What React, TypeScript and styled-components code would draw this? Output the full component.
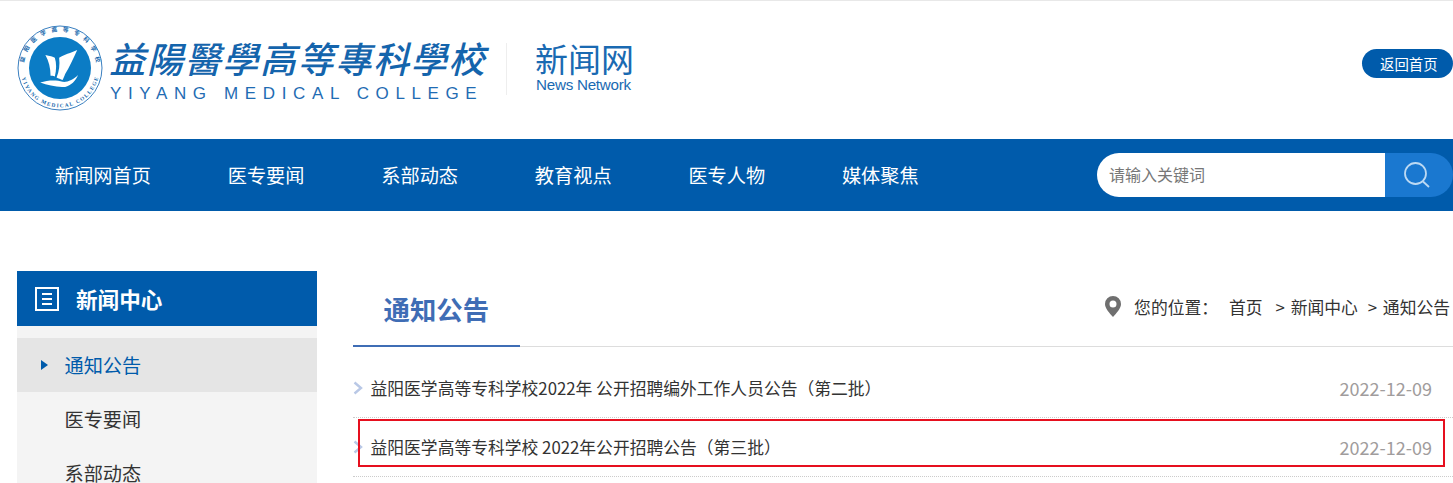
import React from 'react';
import styled, { createGlobalStyle } from 'styled-components';

const blue = '#005bab';
const cjk = '"Noto Sans CJK SC", "Noto Sans", sans-serif';

const navItems = ['新闻网首页', '医专要闻', '系部动态', '教育视点', '医专人物', '媒体聚焦'];
const sideItems = ['通知公告', '医专要闻', '系部动态'];
const newsItems = [
  { title: '益阳医学高等专科学校2022年 公开招聘编外工作人员公告（第二批）', date: '2022-12-09' },
  { title: '益阳医学高等专科学校 2022年公开招聘公告（第三批）', date: '2022-12-09', marked: true },
];

const Seal = () => (
  <SealSvg viewBox="0 0 86 86">
    <defs>
      <path id="sealTop" d="M6.5 43a36.5 36.5 0 0 1 73 0" />
      <path id="sealBottom" d="M3.5 43a39.5 39.5 0 0 0 79 0" />
    </defs>
    <circle cx="43" cy="43" r="42" fill="#fff" stroke="#3a7fc0" strokeWidth="1" />
    <circle cx="43" cy="43" r="31" fill="#0b7cc5" />
    <text fontSize="5.800" fontWeight="700" fill="#1668ac" fontFamily={cjk}>
      <textPath href="#sealTop" startOffset="50%" textAnchor="middle" textLength="104">
        益阳医学高等专科学校
      </textPath>
    </text>
    <text fontSize="5.400" fontWeight="700" fill="#1668ac" fontFamily='"Liberation Serif", serif'>
      <textPath href="#sealBottom" startOffset="50%" textAnchor="middle" textLength="104">
        YIYANG MEDICAL COLLEGE
      </textPath>
    </text>
    <g transform="translate(43 43) scale(.86) translate(-43 -47)" fill="#fff">
      <path d="M26 32c5 1 9 2 11 3 2 6 2 14 0 22-2-1-4-1-5-1 0-9-2-17-6-24zM42 35c5-3 14-6 21-9-4 9-9 20-14 28-1 3-2 5-3 7-2-1-5-2-7-3 3-7 4-15 3-23z" />
      <path d="M20 64c9-3 19-3 26-1 5 1 13-3 18-8-3 7-8 12-15 14-9 1-20-2-29-5z" />
    </g>
  </SealSvg>
);

const Caret = () => (
  <CaretSvg viewBox="0 0 10 14">
    <path d="M1.5 1.5 8 7l-6.500 5.500" fill="none" stroke="#b9c8e6" strokeWidth="2.400" />
  </CaretSvg>
);

export default function App() {
  return (
    <Page>
      <GlobalStyle />
      <Header>
        <Brand>
          <Seal />
          <SchoolName>
            <Calligraphy>益陽醫學高等專科學校</Calligraphy>
            <EnglishName>YIYANG MEDICAL COLLEGE</EnglishName>
          </SchoolName>
          <Divider />
          <SiteName>
            <SiteTitle>新闻网</SiteTitle>
            <SiteSub>News Network</SiteSub>
          </SiteName>
        </Brand>
        <BackHome>返回首页</BackHome>
      </Header>

      <NavBar>
        <NavList>
          {navItems.map((item) => (
            <NavItem key={item}>{item}</NavItem>
          ))}
        </NavList>
        <Search>
          <SearchField>请输入关键词</SearchField>
          <SearchButton>
            <svg width="30" height="30" viewBox="0 0 30 30" fill="none" stroke="#bcd9f3" strokeWidth="1.800">
              <circle cx="13.500" cy="13.500" r="10.500" />
              <path d="m21 21.500 6 5.500" />
            </svg>
          </SearchButton>
        </Search>
      </NavBar>

      <Main>
        <Sidebar>
          <SideHead>
            <svg width="24" height="24" viewBox="0 0 24 24" fill="none" stroke="#fff">
              <rect x="1" y="1" width="22" height="22" strokeWidth="2" />
              <path d="M7 7h10M7 12h10M7 17h10" strokeWidth="2" />
            </svg>
            <SideTitle>新闻中心</SideTitle>
          </SideHead>
          <SideList>
            {sideItems.map((item, i) => (
              <SideItem key={item} $active={i === 0}>
                {item}
              </SideItem>
            ))}
          </SideList>
        </Sidebar>

        <Content>
          <ContentHead>
            <Tab>通知公告</Tab>
            <Crumbs>
              <PinIcon width="16" height="21" viewBox="0 0 16 21">
                <path
                  fillRule="evenodd"
                  d="M8 0a8 8 0 0 1 8 8c0 4.500-4.500 9-8 13-3.500-4-8-8.500-8-13a8 8 0 0 1 8-8zm0 4.500a3.500 3.500 0 1 0 0 7 3.500 3.500 0 0 0 0-7z"
                  fill="#6f6f6f"
                />
              </PinIcon>
              <CrumbLabel>您的位置：</CrumbLabel>
              <CrumbHome>首页</CrumbHome>
              <CrumbStep>&gt; 新闻中心</CrumbStep>
              <span>&gt; 通知公告</span>
            </Crumbs>
          </ContentHead>
          <NewsList>
            {newsItems.map((news) => (
              <NewsRow key={news.title}>
                <Caret />
                <NewsTitle>{news.title}</NewsTitle>
                <NewsDate>{news.date}</NewsDate>
                {news.marked && <RedMark />}
              </NewsRow>
            ))}
          </NewsList>
        </Content>
      </Main>
    </Page>
  );
}

const GlobalStyle = createGlobalStyle`
  html, body {
    margin: 0;
    padding: 0;
    background: #fff;
    overflow: hidden;
  }
`;

const Page = styled.div`
  width: 1453px;
  height: 483px;
  overflow: hidden;
  font-family: ${cjk};
  color: #333;
`;

const Header = styled.header`
  height: 138px;
  border-top: 1px solid #e8e8e8;
  display: flex;
  justify-content: space-between;
  align-items: flex-start;
`;

const Brand = styled.div`
  display: flex;
  align-items: flex-start;
  padding: 24px 0 0 17px;
`;

const SealSvg = styled.svg`
  width: 86px;
  height: 86px;
  flex: none;
`;

const SchoolName = styled.div`
  width: 395px;
  margin: 5px 0 0 8px;
`;

const Calligraphy = styled.div`
  font-family: "Noto Sans CJK TC", sans-serif;
  font-size: 36px;
  font-weight: 500;
  line-height: 50px;
  letter-spacing: 1.700px;
  margin-left: -4px;
  margin-top: 2px;
  color: #1464ac;
  white-space: nowrap;
  transform: skewX(-14deg);
  transform-origin: left bottom;
`;

const EnglishName = styled.div`
  font-family: "Liberation Sans", sans-serif;
  font-size: 17px;
  line-height: 20px;
  letter-spacing: 6.620px;
  margin-left: -1px;
  color: #1f6cb3;
  white-space: nowrap;
  margin-top: 2px;
`;

const Divider = styled.div`
  width: 1px;
  height: 52px;
  margin-top: 18px;
  background: #eee;
`;

const SiteName = styled.div`
  margin: 14px 0 0 28px;
  color: #1a6ab2;
`;

const SiteTitle = styled.div`
  font-size: 33px;
  line-height: 38px;
`;

const SiteSub = styled.div`
  font-family: "Liberation Sans", sans-serif;
  font-size: 15.200px;
  line-height: 16px;
  letter-spacing: -0.250px;
  margin-left: 1px;
`;

const BackHome = styled.div`
  width: 91px;
  height: 29px;
  margin-top: 48px;
  background: ${blue};
  border-radius: 15px;
  color: #fff;
  font-size: 14.400px;
  line-height: 29px;
  padding-left: 18px;
  box-sizing: border-box;
`;

const NavBar = styled.nav`
  height: 72px;
  background: ${blue};
  display: flex;
  justify-content: space-between;
  align-items: center;
  padding-left: 55px;
`;

const NavList = styled.div`
  display: flex;
  gap: 76.800px;
`;

const NavItem = styled.div`
  font-size: 19.200px;
  line-height: 26px;
  color: #fff;
  white-space: nowrap;
`;

const Search = styled.div`
  width: 356px;
  height: 44px;
  display: flex;
  border-radius: 22px;
  overflow: hidden;
`;

const SearchField = styled.div`
  flex: 1;
  background: #fff;
  padding-left: 12px;
  font-size: 16px;
  line-height: 42px;
  color: #777;
`;

const SearchButton = styled.div`
  width: 68px;
  background: #1a78d0;
  display: flex;
  align-items: center;
  justify-content: center;
  padding-right: 4px;
  box-sizing: border-box;
`;

const Main = styled.main`
  display: flex;
  align-items: flex-start;
  gap: 36px;
  padding: 60px 0 0 17px;
`;

const Sidebar = styled.aside`
  width: 300px;
  flex: none;
`;

const SideHead = styled.div`
  height: 55px;
  background: ${blue};
  display: flex;
  align-items: center;
  gap: 17px;
  padding-left: 18px;
  box-sizing: border-box;
`;

const SideTitle = styled.div`
  font-size: 21.600px;
  font-weight: 700;
  color: #fff;
`;

const SideList = styled.ul`
  list-style: none;
  margin: 0;
  padding: 12px 0 0;
  background: #f4f4f4;
`;

const SideItem = styled.li<{ $active?: boolean }>`
  position: relative;
  height: 54px;
  line-height: 54px;
  padding-left: 47.500px;
  font-size: 19.200px;
  color: ${(p) => (p.$active ? blue : '#333')};
  background: ${(p) => (p.$active ? '#e5e5e5' : 'transparent')};

  &::before {
    content: '';
    display: ${(p) => (p.$active ? 'block' : 'none')};
    position: absolute;
    left: 24px;
    top: 22px;
    border-left: 7px solid ${blue};
    border-top: 5.500px solid transparent;
    border-bottom: 5.500px solid transparent;
  }
`;

const Content = styled.section`
  flex: 1;
  min-width: 0;
`;

const ContentHead = styled.div`
  height: 76px;
  border-bottom: 1px solid #ddd;
  display: flex;
  justify-content: space-between;
  align-items: flex-start;
  box-sizing: border-box;
`;

const Tab = styled.div`
  width: 167px;
  height: 76px;
  border-bottom: 2px solid #3f6db5;
  padding-left: 30.500px;
  box-sizing: border-box;
  font-size: 26.400px;
  font-weight: 700;
  line-height: 76px;
  color: #3f6db5;
`;

const Crumbs = styled.div`
  display: flex;
  align-items: center;
  gap: 8px;
  height: 72px;
  font-size: 16.800px;
  word-spacing: 2px;
  color: #333;
  white-space: nowrap;
  padding-right: 3px;
`;

const PinIcon = styled.svg`
  margin-right: 5px;
  margin-top: -2px;
`;

const CrumbLabel = styled.span`
  margin-right: 3px;
`;

const CrumbHome = styled.span`
  margin-right: 5px;
`;

const CrumbStep = styled.span`
  margin-right: 2px;
`;

const NewsList = styled.ul`
  list-style: none;
  margin: 0;
  padding: 0;
`;

const NewsRow = styled.li`
  position: relative;
  height: 59px;
  display: flex;
  align-items: center;
  padding-right: 21px;
  border-bottom: 1px dotted #ccc;
  box-sizing: border-box;
  &:first-child {
    height: 71px;
    padding-top: 11px;
  }
`;

const CaretSvg = styled.svg`
  width: 10px;
  height: 14px;
  flex: none;
  margin-right: 7.500px;
`;

const NewsTitle = styled.div`
  flex: 1;
  font-size: 16.800px;
  color: #333;
  white-space: nowrap;
`;

const NewsDate = styled.div`
  font-size: 18px;
  color: #a09c9c;
`;

const RedMark = styled.div`
  position: absolute;
  left: 5px;
  right: 8px;
  top: 1px;
  bottom: 9px;
  border: 2px solid #e60f1e;
`;
